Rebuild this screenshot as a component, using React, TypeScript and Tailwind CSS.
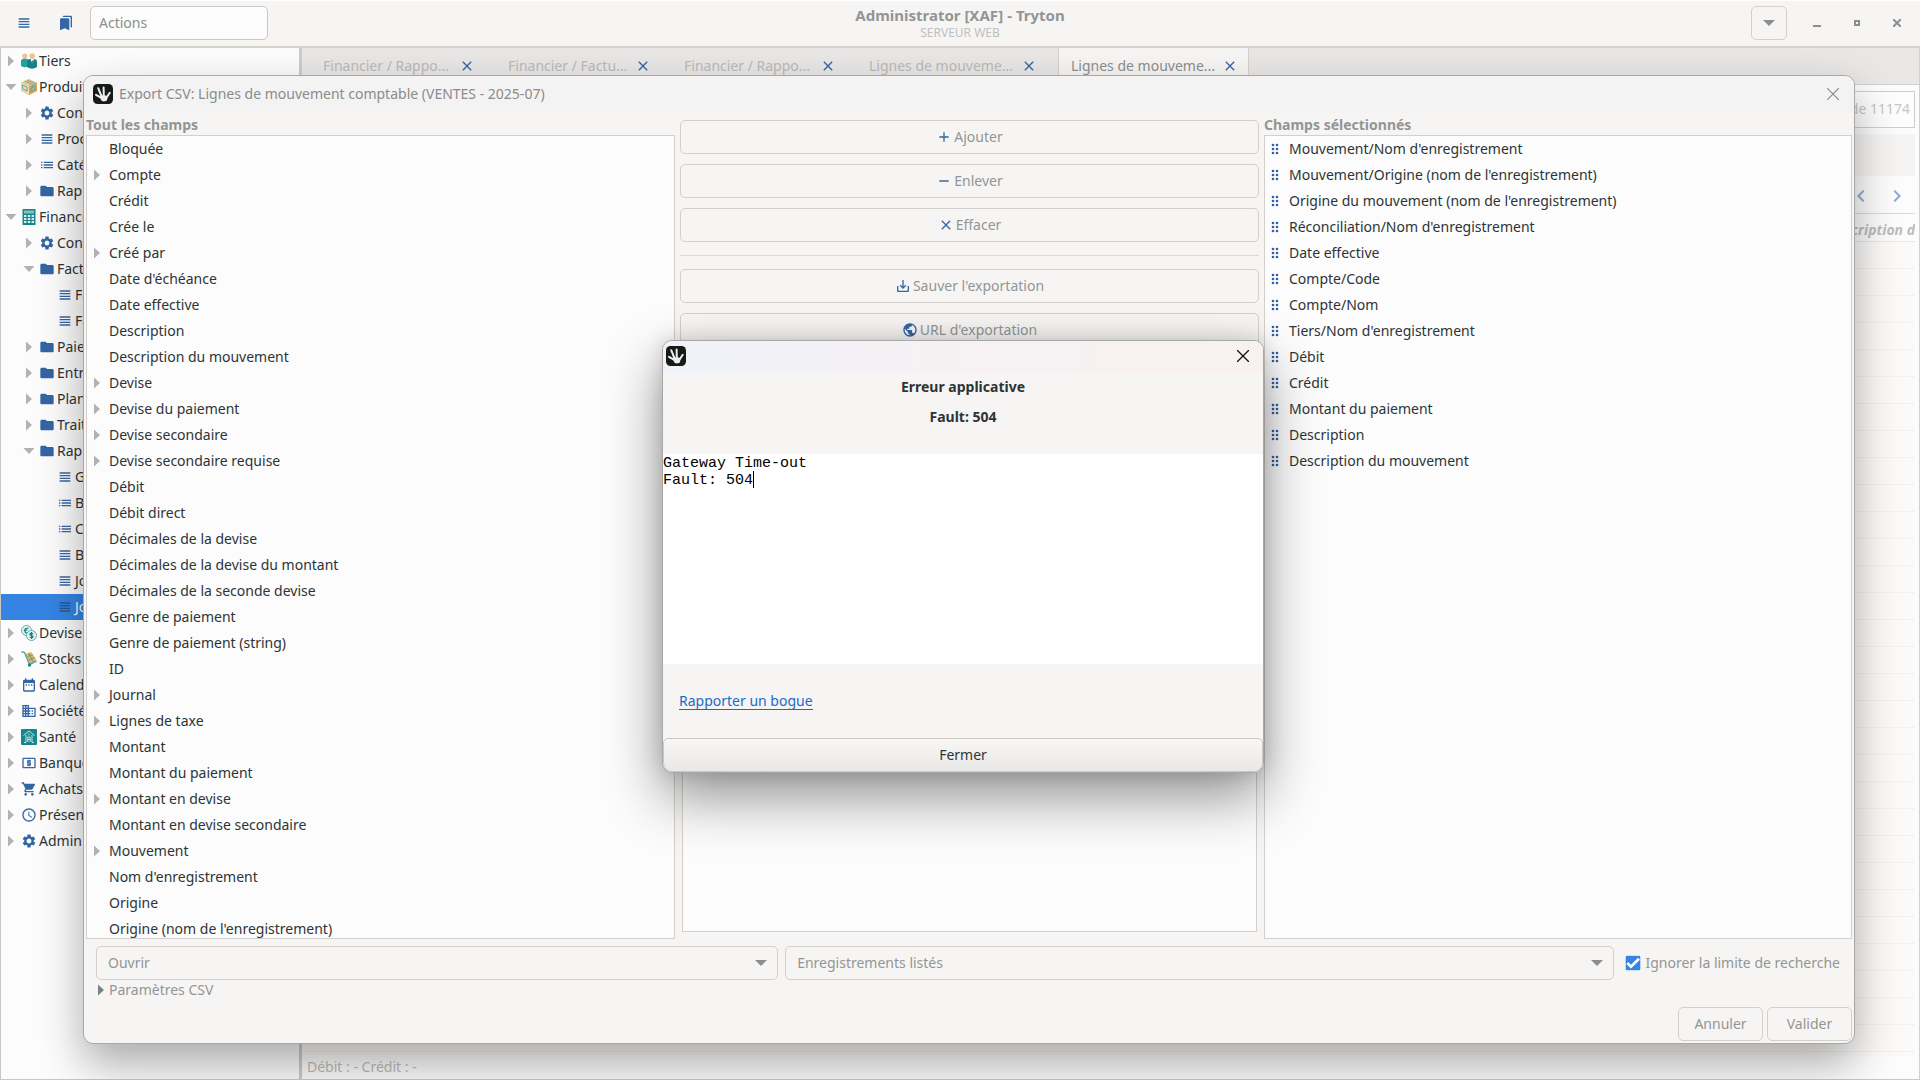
import React from "react";
import {
  MdAccessTime, MdAdd, MdBookmarks, MdBusiness, MdCheck, MdChevronLeft, MdChevronRight,
  MdClose, MdDateRange, MdFolder, MdList, MdLocalAtm, MdPublic,
  MdRemove, MdSaveAlt, MdSettings, MdShoppingCart, MdViewHeadline,
} from "react-icons/md";

type Arrow = "open" | "closed" | "none";

function Expander({ state, dark }: { state: Arrow; dark?: boolean }) {
  const fill = dark ? "#7c8081" : "#b2b2b2";
  return (
    <svg viewBox="0 0 12 12" className="size-3 shrink-0" fill={fill} aria-hidden="true">
      {state === "closed" && <path d="M3 0.5 L9 6 L3 11.5 Z" />}
      {state === "open" && <path d="M0.5 3 H11.5 L6 9 Z" />}
    </svg>
  );
}

function TiersIcon() {
  return (
    <svg viewBox="0 0 16 16" className="size-4">
      <circle cx="3.8" cy="3" r="2.6" fill="#efc48c" />
      <circle cx="11.2" cy="3" r="2.8" fill="#efc48c" />
      <path d="M0 8 Q0 5.4 3.8 5.4 Q7.5 5.4 7.5 8 V13 Q4 15.5 0 13 Z" fill="#21a3a1" />
      <path d="M6 8.5 Q6 5.8 11 5.8 Q16 5.8 16 9 V14 Q11 17.5 6 14 Z" fill="#1c7f85" />
      <path d="M9.5 6 L11.3 10.5 L13 6 Z" fill="#fff" />
      <path d="M11 7.5 L12 7.5 L11.7 10.5 L11.1 10.5 Z" fill="#1c7f85" />
    </svg>
  );
}

function BoxIcon() {
  return (
    <svg viewBox="0 0 16 16" className="size-4">
      <path d="M8 0 L16 3.5 V12 L8 16 L0 12 V3.5 Z" fill="#ecc88e" />
      <path d="M0 3.5 L8 7 V16 L0 12 Z" fill="#f3d5a4" />
      <path d="M8 7 L16 3.5 V12 L8 16 Z" fill="#d3a560" />
      <path d="M3.5 2 L11.5 5.5 V9 M1.5 6 L6 8 V12 L1.5 10 Z M10 9 L14 7 V10.5 L10 12.5 Z M6 1 L14 4.5" fill="none" stroke="#5fada4" strokeWidth="1" />
    </svg>
  );
}

function CalcIcon() {
  return (
    <svg viewBox="0 0 16 16" className="size-4">
      <rect x="1.5" width="13" height="16" fill="#1c8388" />
      <rect x="3" y="1.5" width="10" height="3" fill="#7fc4c4" />
      {[6, 9, 12].map((y) => [3, 6.8, 10.6].map((x) => (
        <rect key={`${x}-${y}`} x={x} y={y} width="2.4" height="2" fill="#d5f2f1" />
      )))}
    </svg>
  );
}

function CoinsIcon() {
  return (
    <svg viewBox="0 0 16 16" className="size-4">
      <circle cx="5.5" cy="5.5" r="5" fill="#e6f5f3" stroke="#5fb0ab" />
      <path d="M7.5 3.4 Q4 2.6 3.8 5.6 Q4 8.6 7.4 7.7 M2.8 5.2 H6.4" fill="none" stroke="#177f80" strokeWidth="1.2" />
      <circle cx="10.5" cy="10.5" r="5" fill="#e6f5f3" stroke="#5fb0ab" />
      <path d="M12.3 8.8 Q8.8 7.6 8.9 9.5 Q9.2 10.4 10.5 10.5 Q12.2 10.9 12.1 11.8 Q11.5 13.2 8.8 12.2 M10.5 7 V14" fill="none" stroke="#177f80" strokeWidth="1.2" />
    </svg>
  );
}

function StockIcon() {
  return (
    <svg viewBox="0 0 16 16" className="size-4">
      <path d="M4.5 3 L10 1 L15.5 9 L9 12.5 Z" fill="#dcb673" />
      <path d="M0.5 0.8 L3.5 1.5 L8.5 13.5 L15.5 10" fill="none" stroke="#55a393" strokeWidth="1.4" />
      <path d="M6.5 5.5 L12 3.6 M7.8 9 L13.6 6.4 M7.3 2 L12 10.8" stroke="#7a8f5e" strokeWidth="0.9" />
      <circle cx="8.5" cy="14" r="1.7" fill="#17888a" />
    </svg>
  );
}

function HealthIcon() {
  return (
    <svg viewBox="0 0 16 16" className="size-4">
      <rect width="16" height="16" rx="1" fill="#17878a" />
      <path d="M2.5 6.5 L8 2 L13.5 6.5 M5 6 V13.5 M11 6 V13.5 M3 13.5 H5 M11 13.5 H13 M6.8 13 V8 H9.2 V13 M6.8 10.5 H9.2 M8 4.5 V6.5" fill="none" stroke="#d9f1f0" strokeWidth="0.9" />
    </svg>
  );
}

function TrytonLogo() {
  return (
    <svg viewBox="0 0 20 20" className="size-5 shrink-0" aria-hidden="true">
      <rect width="20" height="20" rx="4.5" fill="#171b17" />
      <g fill="none" stroke="#efefef" strokeLinecap="round" strokeWidth="2">
        <path d="M7 13.2 L3 10.8" />
        <path d="M8.8 13 L5.2 4.2" />
        <path d="M10.8 13 L10.6 3.4" />
        <path d="M13.6 13.4 L16.8 8.8" />
      </g>
      <path d="M6.2 12.4 Q10 10.2 14.6 12.2 L14 16.6 Q11.6 18 8.8 17 Z" fill="#efefef" />
    </svg>
  );
}

function DragHandle() {
  return (
    <svg viewBox="0 0 8 12" className="h-3 w-2 shrink-0" fill="#2f5fa5" aria-hidden="true">
      {[2, 6, 10].map((y) => [2, 6].map((x) => <circle key={`${x}-${y}`} cx={x} cy={y} r="1.3" />))}
    </svg>
  );
}

const blue = "size-4 text-[#3465a4]";
const lines = <MdViewHeadline className={blue} />;
const bullets = <MdList className={blue} />;
const folder = <MdFolder className={blue} />;
const gear = <MdSettings className={blue} />;

type Node = { level: 0 | 1 | 2; arrow: Arrow; icon: React.ReactNode; label: string; selected?: boolean };

const menu: Node[] = [
  { level: 0, arrow: "closed", icon: <TiersIcon />, label: "Tiers" },
  { level: 0, arrow: "open", icon: <BoxIcon />, label: "Produit" },
  { level: 1, arrow: "closed", icon: gear, label: "Con" },
  { level: 1, arrow: "closed", icon: lines, label: "Proc" },
  { level: 1, arrow: "closed", icon: bullets, label: "Caté" },
  { level: 1, arrow: "closed", icon: folder, label: "Rap" },
  { level: 0, arrow: "open", icon: <CalcIcon />, label: "Financi" },
  { level: 1, arrow: "closed", icon: gear, label: "Con" },
  { level: 1, arrow: "open", icon: folder, label: "Fact" },
  { level: 2, arrow: "none", icon: lines, label: "Fa" },
  { level: 2, arrow: "none", icon: lines, label: "Fa" },
  { level: 1, arrow: "closed", icon: folder, label: "Paie" },
  { level: 1, arrow: "closed", icon: folder, label: "Entr" },
  { level: 1, arrow: "closed", icon: folder, label: "Plan" },
  { level: 1, arrow: "closed", icon: folder, label: "Trait" },
  { level: 1, arrow: "open", icon: folder, label: "Rap" },
  { level: 2, arrow: "none", icon: lines, label: "G" },
  { level: 2, arrow: "none", icon: bullets, label: "B" },
  { level: 2, arrow: "none", icon: bullets, label: "C" },
  { level: 2, arrow: "none", icon: lines, label: "B" },
  { level: 2, arrow: "none", icon: lines, label: "Jo" },
  { level: 2, arrow: "none", icon: <MdViewHeadline className="size-4 text-[#2a5590]" />, label: "Jo", selected: true },
  { level: 0, arrow: "closed", icon: <CoinsIcon />, label: "Devise" },
  { level: 0, arrow: "closed", icon: <StockIcon />, label: "Stocks" },
  { level: 0, arrow: "closed", icon: <MdDateRange className={blue} />, label: "Calend" },
  { level: 0, arrow: "closed", icon: <MdBusiness className={blue} />, label: "Société" },
  { level: 0, arrow: "closed", icon: <HealthIcon />, label: "Santé" },
  { level: 0, arrow: "closed", icon: <MdLocalAtm className={blue} />, label: "Banque" },
  { level: 0, arrow: "closed", icon: <MdShoppingCart className={blue} />, label: "Achats" },
  { level: 0, arrow: "closed", icon: <MdAccessTime className={blue} />, label: "Présen" },
  { level: 0, arrow: "closed", icon: gear, label: "Admin" },
];

const indent = { 0: "pl-1", 1: "pl-[22px]", 2: "pl-10" };

function Sidebar() {
  return (
    <nav className="w-[302px] shrink-0 overflow-hidden border-l border-r-3 border-l-[#cdc7c2] border-r-[#d0cbc7] bg-[#fcfcfc]">
      <ul>
        {menu.map((n, i) => (
          <li
            key={i}
            className={`flex h-[26px] items-center whitespace-nowrap ${indent[n.level]} ${n.selected ? "bg-[#3584e4] text-white" : "text-[#2e3436]"}`}
          >
            <Expander state={n.arrow} />
            <span className="mr-0.5 ml-1 flex size-4 items-center justify-center">{n.icon}</span>
            {n.label}
          </li>
        ))}
      </ul>
    </nav>
  );
}

const tabs = [
  { label: "Financier / Rappo...", width: "w-[178px]" },
  { label: "Financier / Factu...", width: "w-[169px]" },
  { label: "Financier / Rappo...", width: "w-[178px]" },
  { label: "Lignes de mouveme...", width: "w-[194px]" },
  { label: "Lignes de mouveme...", width: "w-[191px]", active: true },
];

function Workspace() {
  return (
    <main className="flex min-w-0 flex-1 flex-col border-r border-[#d5d0cc] bg-[#fcfcfc]">
      <div className="flex h-[37px] shrink-0 gap-[7px] border-b border-[#d5d0cc] bg-[#e8e7e6] pl-[9px]">
        {tabs.map((t, i) => (
          <div
            key={i}
            className={`flex items-center justify-between pl-3 whitespace-nowrap ${t.width} ${t.active ? "border-x border-[#d5d0cc] bg-[#f6f5f4] pr-2.5 text-[#8b8e8f]" : "pr-3.5 text-[#bab9b8]"}`}
          >
            <button type="button">{t.label}</button>
            <button type="button" aria-label="Fermer l'onglet">
              <MdClose className="size-4 text-[#3465a4]" />
            </button>
          </div>
        ))}
      </div>
      <div className="flex min-h-0 flex-1 flex-col overflow-hidden pr-1 text-[#cac6c3]">
        <div className="mt-1.5 flex h-[37px] w-24 shrink-0 items-center justify-end self-end border border-[#d0cdca] bg-[#fdfdfd] px-1 pb-0.5">de 11174</div>
        <div className="mt-1.5 h-[42px] shrink-0 bg-[#f5f4f3]" />
        <div className="flex h-[38px] shrink-0 items-center justify-end gap-3 border-b border-[#dddbd9] pt-0.5 pr-1.5 text-[#8fabd3]">
          <button type="button" aria-label="Précédent"><MdChevronLeft className="size-6" /></button>
          <button type="button" aria-label="Suivant"><MdChevronRight className="size-6" /></button>
        </div>
        <div className="flex h-[28px] shrink-0 items-center justify-end overflow-hidden border-b border-[#ebe9e8] pt-1 font-bold whitespace-nowrap text-[#bbbcbc] italic">cription d</div>
        <div className="min-h-0 flex-1 overflow-hidden bg-[#fbfaf9]">
          {Array.from({ length: 40 }, (_, i) => (
            <div key={i} className="h-[27px] border-b border-[#f2f1f0]" />
          ))}
        </div>
      </div>
      <div className="flex h-[23px] shrink-0 items-center px-[5px] pb-0.5 text-[#bebbb8]">Débit : - Crédit : -</div>
    </main>
  );
}

const fields: [string, boolean?][] = [
  ["Bloquée"], ["Compte", true], ["Crédit"], ["Crée le"], ["Créé par", true], ["Date d'échéance"],
  ["Date effective"], ["Description"], ["Description du mouvement"], ["Devise", true],
  ["Devise du paiement", true], ["Devise secondaire", true], ["Devise secondaire requise", true],
  ["Débit"], ["Débit direct"], ["Décimales de la devise"], ["Décimales de la devise du montant"],
  ["Décimales de la seconde devise"], ["Genre de paiement"], ["Genre de paiement (string)"], ["ID"],
  ["Journal", true], ["Lignes de taxe", true], ["Montant"], ["Montant du paiement"],
  ["Montant en devise", true], ["Montant en devise secondaire"], ["Mouvement", true],
  ["Nom d'enregistrement"], ["Origine"], ["Origine (nom de l'enregistrement)"],
];

const selectedFields = [
  "Mouvement/Nom d'enregistrement", "Mouvement/Origine (nom de l'enregistrement)",
  "Origine du mouvement (nom de l'enregistrement)", "Réconciliation/Nom d'enregistrement",
  "Date effective", "Compte/Code", "Compte/Nom", "Tiers/Nom d'enregistrement", "Débit", "Crédit",
  "Montant du paiement", "Description", "Description du mouvement",
];

function ActionButton({ icon, children }: { icon: React.ReactNode; children: React.ReactNode }) {
  return (
    <button type="button" className="flex h-[34px] shrink-0 items-center justify-center gap-0.5 rounded-[5px] border border-[#d2cfcc] text-[#929595]">
      {icon}
      {children}
    </button>
  );
}

function Combo({ label, value, className }: { label: string; value: string; className: string }) {
  return (
    <div className={`relative min-w-0 ${className}`}>
      <select aria-label={label} className="h-[34px] w-full appearance-none rounded-[5px] border border-[#d2cfcc] px-[11px] text-[#929595]">
        <option>{value}</option>
      </select>
      <svg viewBox="0 0 12 6" className="pointer-events-none absolute top-3.5 right-[11px] h-1.5 w-3" fill="#8b8e8f" aria-hidden="true">
        <path d="M0 0 H12 L6 6 Z" />
      </svg>
    </div>
  );
}

function ExportDialog() {
  return (
    <section
      role="dialog"
      aria-label="Export CSV"
      className="absolute top-[75px] right-[65px] bottom-9 left-[83px] flex flex-col overflow-hidden rounded-[10px] border border-[#a9a8a7] bg-[#f6f5f4] shadow-[0_20px_44px_rgba(0,0,0,0.32)]"
    >
      <header className="flex h-[37px] shrink-0 items-center gap-1.5 bg-[#f3f3f3] pr-[15px] pb-0.5 pl-[9px] text-[#8b8b8b]">
        <TrytonLogo />
        <h2 className="flex-1">Export CSV: Lignes de mouvement comptable (VENTES - 2025-07)</h2>
        <button type="button" aria-label="Fermer">
          <svg viewBox="0 0 12 12" className="size-3" stroke="#8b8b8b" strokeWidth="1.2"><path d="M0 0 L12 12 M12 0 L0 12" /></svg>
        </button>
      </header>
      <div className="flex min-h-0 flex-1 gap-[5px] px-0.5">
        <div className="flex min-w-0 flex-[589] flex-col pt-0.5">
          <h3 className="h-5 font-bold text-[#929595]">Tout les champs</h3>
          <ul className="min-h-0 flex-1 overflow-hidden border border-[#d2cfcc] bg-[#fcfcfc] text-[#2e3436]">
            {fields.map(([name, parent]) => (
              <li key={name} className="flex h-[26px] items-center gap-1.5 pl-1">
                <Expander state={parent ? "closed" : "none"} />
                {name}
              </li>
            ))}
          </ul>
        </div>
        <div className="flex min-w-0 flex-[579] flex-col gap-2.5 pt-[7px] pb-[7px]">
          <ActionButton icon={<MdAdd className="size-4 text-[#3465a4]" />}>Ajouter</ActionButton>
          <ActionButton icon={<MdRemove className="size-4 text-[#3465a4]" />}>Enlever</ActionButton>
          <ActionButton icon={<MdClose className="size-4 text-[#3465a4]" />}>Effacer</ActionButton>
          <hr className="my-[3px] border-[#dad7d4]" />
          <ActionButton icon={<MdSaveAlt className="size-4 text-[#3465a4]" />}>Sauver l'exportation</ActionButton>
          <ActionButton icon={<MdPublic className="size-4 text-[#3465a4]" />}>URL d'exportation</ActionButton>
          <div className="mx-0.5 flex-1 border border-[#d2cfcc] bg-[#fcfcfc]" />
        </div>
        <div className="flex min-w-0 flex-[588] flex-col pt-0.5">
          <h3 className="h-5 font-bold text-[#929595]">Champs sélectionnés</h3>
          <ul className="min-h-0 flex-1 overflow-hidden border border-[#d2cfcc] bg-[#fcfcfc] text-[#2e3436]">
            {selectedFields.map((name) => (
              <li key={name} className="flex h-[26px] items-center gap-2.5 pl-1.5">
                <DragHandle />
                {name}
              </li>
            ))}
          </ul>
        </div>
      </div>
      <div className="mt-[7px] flex items-center gap-[7px] pr-3.5 pl-3 text-[#929595]">
        <Combo label="Ouverture" value="Ouvrir" className="flex-[681]" />
        <Combo label="Enregistrements" value="Enregistrements listés" className="flex-[828]" />
        <label className="ml-1 flex items-center gap-1 whitespace-nowrap">
          <span className="relative flex size-4">
            <input type="checkbox" defaultChecked className="size-4 appearance-none rounded-[3px] bg-[#3584e4]" />
            <MdCheck className="pointer-events-none absolute inset-0 size-4 stroke-2 text-white" />
          </span>
          Ignorer la limite de recherche
        </label>
      </div>
      <button type="button" className="flex h-5 items-center gap-0.5 self-start pl-[11px] text-[#929595]">
        <Expander state="closed" dark />
        Paramètres CSV
      </button>
      <footer className="flex justify-end gap-1 px-0.5 pt-[7px] pb-0.5">
        <button type="button" className="h-[34px] w-[85px] rounded-[5px] border border-[#d2cfcc] text-[#929595]">Annuler</button>
        <button type="button" className="h-[34px] w-[85px] rounded-[5px] border border-[#d2cfcc] text-[#929595]">Valider</button>
      </footer>
    </section>
  );
}

function ErrorDialog() {
  return (
    <section
      role="alertdialog"
      aria-label="Erreur applicative"
      className="absolute top-[340px] left-[calc(50%-298px)] flex w-[602px] flex-col overflow-hidden rounded-[10px] border border-[#a9a8a7] bg-[#f6f5f4] text-[#2e3436] shadow-[0_24px_56px_rgba(0,0,0,0.42),0_0_20px_rgba(0,0,0,0.14)]"
    >
      <header className="flex h-8 items-center justify-between bg-linear-to-r from-[#eff2f9] via-[#f6f1f3] to-[#f8f1f0] pr-3.5 pb-0.5 pl-[3px]">
        <TrytonLogo />
        <button type="button" aria-label="Fermer">
          <svg viewBox="0 0 12 12" className="size-3" stroke="#111" strokeWidth="1.3"><path d="M0 0 L12 12 M12 0 L0 12" /></svg>
        </button>
      </header>
      <div className="flex h-[81px] flex-col items-center gap-2.5 pt-1 font-bold">
        <p className="h-5 leading-5">Erreur applicative</p>
        <p className="h-5 leading-5">Fault: 504</p>
      </div>
      <div className="relative bg-white">
        <textarea
          aria-label="Détails"
          readOnly
          className="block h-[210px] w-full resize-none pt-px font-['Liberation_Mono',monospace] text-[15px] leading-[17px] text-black outline-none"
          defaultValue={"Gateway Time-out\nFault: 504"}
        />
        <span className="absolute top-[17px] left-[90px] h-[17px] w-px bg-black" />
      </div>
      <div className="flex h-[74px] items-center px-4 pb-0.5">
        <a href="#bogue" className="h-[19px] overflow-hidden border-b border-[#1b6acb] leading-5 text-[#1b6acb]">Rapporter un bogue</a>
      </div>
      <button type="button" className="h-[34px] rounded-t-[5px] rounded-b-[9px] border border-[#cdc7c2] bg-linear-to-b from-[#f8f7f6] to-[#e9e8e6]">Fermer</button>
    </section>
  );
}

export default function App() {
  return (
    <div className="relative flex h-screen flex-col overflow-hidden bg-[#f6f5f4] font-['Noto_Sans','Open_Sans',sans-serif] text-sm leading-5">
      <header className="grid h-12 shrink-0 grid-cols-3 items-center border-t border-b-2 border-t-white border-b-[#d8d2cd] bg-[#f6f5f4] pb-0.5">
        <div className="flex items-center pl-4">
          <button type="button" aria-label="Menu"><MdViewHeadline className="size-4 text-[#3465a4]" /></button>
          <button type="button" aria-label="Favoris" className="mr-4 ml-[26px]"><MdBookmarks className="size-4 text-[#3465a4]" /></button>
          <input aria-label="Actions" placeholder="Actions" className="h-[34px] w-[178px] rounded-[5px] border border-[#cdc7c2] bg-[#fcfcfc] px-2 placeholder:text-[#8b8e8f]" />
        </div>
        <div className="text-center">
          <h1 className="text-[15px] leading-5 font-bold text-[#929595]">Administrator [XAF] - Tryton</h1>
          <p className="text-xs leading-4 text-[#bdc1c0]">SERVEUR WEB</p>
        </div>
        <div className="flex items-center justify-end pr-[19px] text-[#929595]">
          <button type="button" aria-label="Options" className="mr-[26px] flex h-[34px] w-9 items-center justify-center rounded-[5px] border border-[#d2cfcc]">
            <svg viewBox="0 0 12 6" className="h-1.5 w-3" fill="#8b8e8f"><path d="M0 0 H12 L6 6 Z" /></svg>
          </button>
          <button type="button" aria-label="Réduire" className="mr-8"><svg viewBox="0 0 8 8" className="size-2" fill="#8b8e8f"><path d="M0 6 H8 V8 H0 Z" /></svg></button>
          <button type="button" aria-label="Agrandir" className="mr-8"><svg viewBox="0 0 8 8" className="size-2" fill="none" stroke="#8b8e8f" strokeWidth="2"><rect x="2" y="2" width="4" height="4" /></svg></button>
          <button type="button" aria-label="Quitter"><svg viewBox="0 0 8 8" className="size-2" stroke="#8b8e8f" strokeWidth="2"><path d="M0 0 L8 8 M8 0 L0 8" /></svg></button>
        </div>
      </header>
      <div className="flex min-h-0 flex-1 border-b border-[#cdc7c2]">
        <Sidebar />
        <Workspace />
      </div>
      <ExportDialog />
      <ErrorDialog />
    </div>
  );
}
